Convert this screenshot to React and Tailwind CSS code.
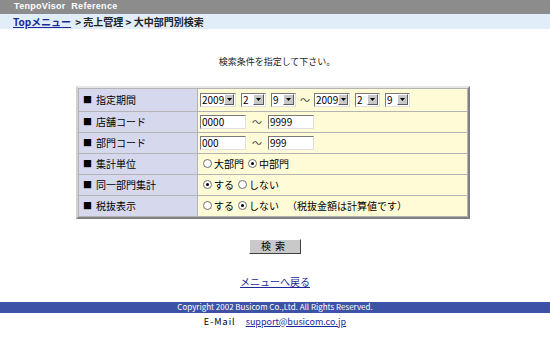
import React from "react";

const font = { fontFamily: '"Noto Sans CJK JP", "Liberation Sans", sans-serif' };

const Select = ({ value, w }) => (
  <div className={`flex items-center h-[14px] bg-white border border-t-[#7a7a7a] border-l-[#7a7a7a] border-b-[#e0e0e0] border-r-[#e0e0e0] ${w}`}>
    <span className="flex-1 pl-[1px] text-[10px] leading-none text-black">{value}</span>
    <span className="w-[11px] h-[11px] mr-[1px] flex items-center justify-center bg-[#c8c8c8] border border-t-white border-l-white border-b-[#5a5a5a] border-r-[#5a5a5a]">
      <svg width="5" height="3" viewBox="0 0 5 3"><path d="M0 0h5L2.5 3z" fill="#000" /></svg>
    </span>
  </div>
);

const Input = ({ value }) => (
  <div className="w-[46px] h-[14px] flex items-center bg-white border border-t-[#7a7a7a] border-l-[#7a7a7a] border-b-[#e0e0e0] border-r-[#e0e0e0] pl-[1px] text-[10px] leading-none">
    {value}
  </div>
);

const Radio = ({ checked, label }) => (
  <span className="flex items-center gap-[2px]">
    <span className="w-[9px] h-[9px] rounded-full border border-[#707070] bg-white flex items-center justify-center">
      {checked && <span className="w-[3px] h-[3px] rounded-full bg-black" />}
    </span>
    <span>{label}</span>
  </span>
);

const Tilde = () => <span className="text-[10px] text-[#444] px-[4px]">～</span>;

const Row = ({ label, children, h = "h-[20px]" }) => (
  <>
    <div className={`${h} flex items-center pl-[4px] bg-[#d6d9ee] text-[10px] text-black`}>
      <span className="mr-[4px] text-[9px]">■</span>
      {label}
    </div>
    <div className={`${h} flex items-center pl-[2px] bg-[#fffbd6] text-[10px] text-black`}>{children}</div>
  </>
);

export default function App() {
  return (
    <div className="w-[550px] h-[340px] bg-white overflow-hidden" style={font}>
      <div className="h-[14px] bg-[#8c8c8c] flex items-center pl-[14px]">
        <span className="text-white text-[9px] font-bold tracking-[0.3px]" style={{ fontFamily: '"Liberation Sans", sans-serif' }}>
          TenpoVisor&nbsp; Reference
        </span>
      </div>
      <div className="h-[15px] bg-[#e1edf9] flex items-center pl-[13px] text-[10px] font-bold text-[#222]">
        <a className="text-[#1a2a9a] underline">Topメニュー</a>
        <span className="ml-[4px]">&gt; 売上管理 &gt; 大中部門別検索</span>
      </div>

      <div className="pt-[26px] text-center text-[9px] text-[#222] pl-[4px]">検索条件を指定して下さい。</div>

      <div className="flex justify-center pt-[17px]">
        <div className="w-[394px] ml-[-4px] border-2 border-t-[#e6e6e6] border-l-[#d0d0d0] border-b-[#808080] border-r-[#808080] bg-[#a8a8a8]">
          <div className="grid grid-cols-[118px_1fr] gap-[1px] p-[1px] bg-[#b4b4b4]">
            <Row label="指定期間" h="h-[22px]">
              <div className="flex items-center gap-[5px]">
                <Select value="2009" w="w-[36px]" />
                <Select value="2" w="w-[25px]" />
                <Select value="9" w="w-[25px]" />
              </div>
              <Tilde />
              <div className="flex items-center gap-[5px]">
                <Select value="2009" w="w-[36px]" />
                <Select value="2" w="w-[25px]" />
                <Select value="9" w="w-[25px]" />
              </div>
            </Row>
            <Row label="店舗コード">
              <Input value="0000" />
              <span className="px-[6px] text-[#444]">～</span>
              <Input value="9999" />
            </Row>
            <Row label="部門コード">
              <Input value="000" />
              <span className="px-[6px] text-[#444]">～</span>
              <Input value="999" />
            </Row>
            <Row label="集計単位">
              <div className="flex items-center gap-[4px] pl-[3px]">
                <Radio label="大部門" />
                <Radio checked label="中部門" />
              </div>
            </Row>
            <Row label="同一部門集計">
              <div className="flex items-center gap-[4px] pl-[3px]">
                <Radio checked label="する" />
                <Radio label="しない" />
              </div>
            </Row>
            <Row label="税抜表示">
              <div className="flex items-center gap-[4px] pl-[3px]">
                <Radio label="する" />
                <Radio checked label="しない" />
                <span className="ml-[4px]">（税抜金額は計算値です）</span>
              </div>
            </Row>
          </div>
        </div>
      </div>

      <div className="flex justify-center pt-[20px]">
        <button className="w-[52px] h-[15px] bg-[#c9c9c9] border border-t-white border-l-white border-b-[#404040] border-r-[#404040] text-[10px] leading-none text-black tracking-[4px]">
          検索
        </button>
      </div>

      <div className="pt-[20px] text-center text-[10px]">
        <a className="text-[#1a2a9a] underline">メニューへ戻る</a>
      </div>

      <div className="mt-[13px] h-[11px] bg-[#3d52a6] flex items-center justify-center text-white text-[8px] leading-none">
        Copyright 2002 Busicom Co.,Ltd. All Rights Reserved.
      </div>
      <div className="pt-[2px] text-center text-[9px] text-black">
        <span className="tracking-[1px]">E-Mail</span>
        <a className="ml-[10px] text-[#1a2a9a] underline">support@busicom.co.jp</a>
      </div>
    </div>
  );
}
